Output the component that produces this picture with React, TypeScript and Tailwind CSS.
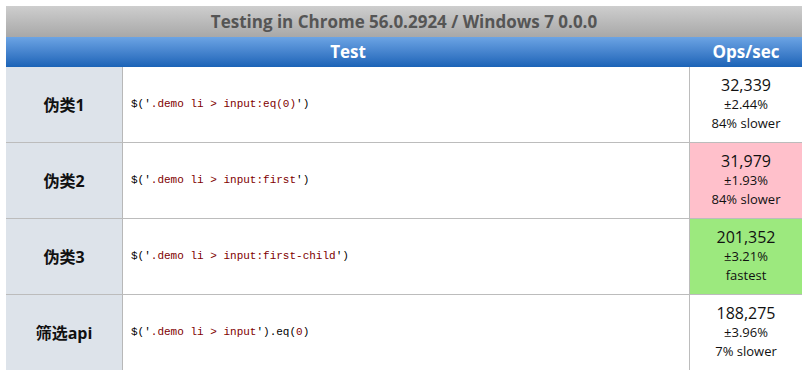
import React from "react";

type Part = { t: string; red?: boolean };

const rows: {
  name: string;
  code: Part[];
  ops: string;
  rme: string;
  note: string;
  bg: string;
}[] = [
  {
    name: "伪类1",
    code: [{ t: "$('" }, { t: ".demo li > input:eq(0)", red: true }, { t: "')" }],
    ops: "32,339",
    rme: "±2.44%",
    note: "84% slower",
    bg: "bg-white",
  },
  {
    name: "伪类2",
    code: [{ t: "$('" }, { t: ".demo li > input:first", red: true }, { t: "')" }],
    ops: "31,979",
    rme: "±1.93%",
    note: "84% slower",
    bg: "bg-[#ffc0cb]",
  },
  {
    name: "伪类3",
    code: [{ t: "$('" }, { t: ".demo li > input:first-child", red: true }, { t: "')" }],
    ops: "201,352",
    rme: "±3.21%",
    note: "fastest",
    bg: "bg-[#9ce97e]",
  },
  {
    name: "筛选api",
    code: [
      { t: "$('" },
      { t: ".demo li > input", red: true },
      { t: "').eq(" },
      { t: "0", red: true },
      { t: ")" },
    ],
    ops: "188,275",
    rme: "±3.96%",
    note: "7% slower",
    bg: "bg-white",
  },
];

export default function App() {
  return (
    <div className="w-[806px] h-[378px] bg-white pt-[6px] pl-[6px] font-['Open_Sans',sans-serif]">
      <div className="w-[796px]">
        {/* caption */}
        <div className="h-[31px] flex items-center justify-center bg-linear-to-b from-[#cecece] to-[#a8a8a8] text-[#555] text-[17px] font-bold">
          Testing in Chrome 56.0.2924 / Windows 7 0.0.0
        </div>

        {/* header */}
        <div className="grid grid-cols-[684px_112px] h-[30px] bg-linear-to-b from-[#6ca4e4] to-[#1a63b7] text-white text-[17px] font-bold">
          <div className="flex items-center justify-center">Test</div>
          <div className="flex items-center justify-center">Ops/sec</div>
        </div>

        {rows.map((r, i) => (
          <div
            key={r.name}
            className={`grid grid-cols-[117px_567px_112px] h-[75px] box-content ${
              i > 0 ? "border-t border-[#bcbcbc]" : ""
            }`}
          >
            <div className="bg-[#dde3ea] border-r border-[#b8b8b8] flex items-center justify-center text-[16px] font-bold text-[#111] font-['Open_Sans','Noto_Sans_CJK_SC',sans-serif]">
              {r.name}
            </div>
            <div className="border-r border-[#bcbcbc] flex items-center pl-[8px] font-['Liberation_Mono',monospace] text-[11px] text-black">
              {r.code.map((p, j) => (
                <span key={j} className={p.red ? "text-[#800000]" : ""}>
                  {p.t}
                </span>
              ))}
            </div>
            <div className={`${r.bg} flex flex-col items-center justify-center text-[#111] leading-[19px]`}>
              <div className="text-[16px]">{r.ops}</div>
              <div className="text-[13px]">{r.rme}</div>
              <div className="text-[13px]">{r.note}</div>
            </div>
          </div>
        ))}
      </div>
    </div>
  );
}
